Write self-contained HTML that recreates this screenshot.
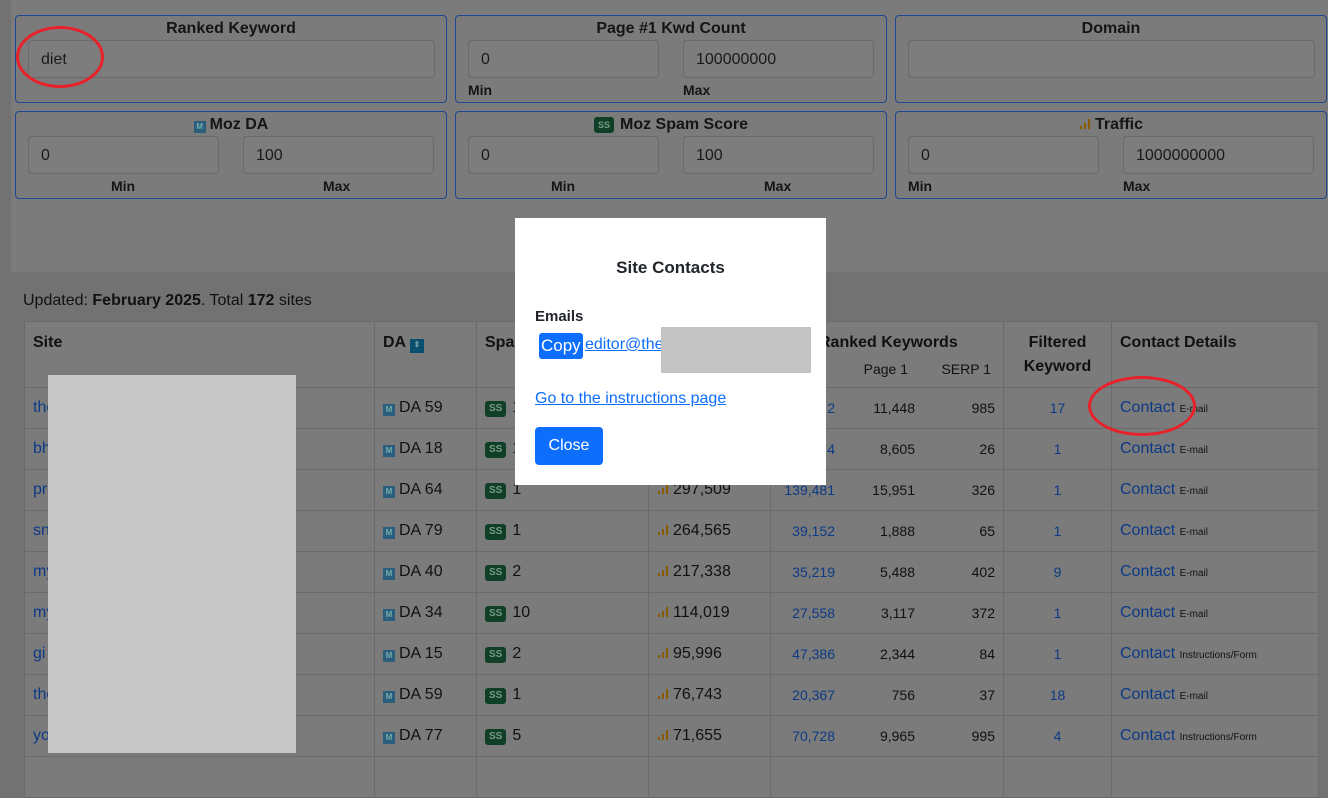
<!DOCTYPE html>
<html><head><meta charset="utf-8"><style>
*{box-sizing:border-box;margin:0;padding:0}
body{width:1328px;height:763px;overflow:hidden;background:#727272;font-family:"Liberation Sans",sans-serif;color:#111;position:relative}
.top{position:absolute;left:11px;top:0;width:1317px;height:272px;background:#7b7b7b}
.box{position:absolute;border:1px solid #1d4796;border-radius:4px;height:88px}
.box h4{position:absolute;top:4px;left:0;right:0;text-align:center;font-size:16px;font-weight:bold;color:#151515}
.inp{position:absolute;top:24px;height:38px;border:1px solid #6a6a6a;border-radius:4px;background:#7d7d7d;font-size:16px;padding:10px 12px;color:#1a1a1a}
.lab{position:absolute;top:66px;font-size:14px;font-weight:bold;color:#151515}
.upd{position:absolute;left:23px;top:292px;font-size:16px}
table{position:absolute;left:24px;top:321px;border-collapse:collapse;background:#7b7b7b;font-size:16px;table-layout:fixed}
td,th{border:1px solid #6b6b6b;height:41px;padding:0 8px;vertical-align:middle}
th{text-align:left;vertical-align:top;padding-top:11px;height:66px;line-height:24px}
th{padding-top:9px}
.b{color:#0c3a85}
.c{text-align:center}
.ss{display:inline-block;background:#0f3f26;color:#7a9a88;font-size:10px;font-weight:bold;border-radius:3px;padding:2px 4px;margin-right:6px;vertical-align:1px;line-height:12px}
.m{display:inline-block;width:12px;height:12px;background:#2a5e7c;color:#7aa;font-size:8px;text-align:center;line-height:12px;font-weight:bold;margin-right:4px;vertical-align:0}
.sm{font-size:10px;color:#111}
.bars{display:inline-block;width:12px;height:12px;margin-right:4px;vertical-align:0}
.red{position:absolute;border:3px solid #e8212a;border-radius:50%}
.modal{position:absolute;left:515px;top:218px;width:311px;height:267px;background:#fff}
.rk{position:relative;padding:0;font-size:14px}
.rk span{position:absolute;top:12px}
.k1{right:168px;color:#0c3a85}.k2{right:88px}.k3{right:8px}
</style></head><body>
<div class="top"></div>
<div class="box" style="left:15px;top:15px;width:432px"><h4>Ranked Keyword</h4><div class="inp" style="left:12px;width:407px">diet</div></div>
<div class="box" style="left:455px;top:15px;width:432px"><h4>Page #1 Kwd Count</h4><div class="inp" style="left:12px;width:191px">0</div><div class="inp" style="left:227px;width:191px">100000000</div><div class="lab" style="left:12px">Min</div><div class="lab" style="left:227px">Max</div></div>
<div class="box" style="left:895px;top:15px;width:432px"><h4>Domain</h4><div class="inp" style="left:12px;width:407px"></div></div>
<div class="box" style="left:15px;top:111px;width:432px"><h4><span class="m">M</span>Moz DA</h4><div class="inp" style="left:12px;width:191px">0</div><div class="inp" style="left:227px;width:191px">100</div><div class="lab" style="left:95px">Min</div><div class="lab" style="left:307px">Max</div></div>
<div class="box" style="left:455px;top:111px;width:432px"><h4><span class="ss" style="font-size:9px">SS</span>Moz Spam Score</h4><div class="inp" style="left:12px;width:191px">0</div><div class="inp" style="left:227px;width:191px">100</div><div class="lab" style="left:95px">Min</div><div class="lab" style="left:308px">Max</div></div>
<div class="box" style="left:895px;top:111px;width:432px"><h4><svg class="bars" viewBox="0 0 12 12"><rect x="1" y="9" width="2" height="3" fill="#8a5a00"/><rect x="5" y="6" width="2" height="6" fill="#8a5a00"/><rect x="9" y="2" width="2" height="10" fill="#8a5a00"/></svg>Traffic</h4><div class="inp" style="left:12px;width:191px">0</div><div class="inp" style="left:227px;width:191px">1000000000</div><div class="lab" style="left:12px">Min</div><div class="lab" style="left:227px">Max</div></div>
<div class="red" style="left:16px;top:26px;width:88px;height:62px"></div>
<div class="upd">Updated: <b>February 2025</b>. Total <b>172</b> sites</div>
<table>
<colgroup><col style="width:350px"><col style="width:102px"><col style="width:172px"><col style="width:122px"><col style="width:233px"><col style="width:108px"><col style="width:207px"></colgroup>
<tr><th>Site</th><th>DA <span class="m" style="width:14px;height:14px;background:#0b4f70">⇕</span></th><th>Spam</th><th>Traffic</th><th style="padding-left:48px;position:relative">Ranked Keywords<span style="position:absolute;font-weight:normal;font-size:14px;top:35px;right:95px">Page 1</span><span style="position:absolute;font-weight:normal;font-size:14px;top:35px;right:12px">SERP 1</span></th><th style="text-align:center">Filtered<br>Keyword</th><th>Contact Details</th></tr>
<tr><td class="b">the</td><td><span class="m">M</span>DA 59</td><td><span class="ss">SS</span>1</td><td></td><td class="rk"><span class="k1">2</span><span class="k2">11,448</span><span class="k3">985</span></td><td class="c b" style="font-size:14px">17</td><td><span class="b">Contact</span> <span class="sm">E-mail</span></td></tr>
<tr><td class="b">bh</td><td><span class="m">M</span>DA 18</td><td><span class="ss">SS</span>1</td><td></td><td class="rk"><span class="k1">4</span><span class="k2">8,605</span><span class="k3">26</span></td><td class="c b" style="font-size:14px">1</td><td><span class="b">Contact</span> <span class="sm">E-mail</span></td></tr>
<tr><td class="b">pr</td><td><span class="m">M</span>DA 64</td><td><span class="ss">SS</span>1</td><td><svg class="bars" viewBox="0 0 12 12"><rect x="1" y="9" width="2" height="3" fill="#8a5a00"/><rect x="5" y="6" width="2" height="6" fill="#8a5a00"/><rect x="9" y="2" width="2" height="10" fill="#8a5a00"/></svg>297,509</td><td class="rk"><span class="k1">139,481</span><span class="k2">15,951</span><span class="k3">326</span></td><td class="c b" style="font-size:14px">1</td><td><span class="b">Contact</span> <span class="sm">E-mail</span></td></tr>
<tr><td class="b">sn</td><td><span class="m">M</span>DA 79</td><td><span class="ss">SS</span>1</td><td><svg class="bars" viewBox="0 0 12 12"><rect x="1" y="9" width="2" height="3" fill="#8a5a00"/><rect x="5" y="6" width="2" height="6" fill="#8a5a00"/><rect x="9" y="2" width="2" height="10" fill="#8a5a00"/></svg>264,565</td><td class="rk"><span class="k1">39,152</span><span class="k2">1,888</span><span class="k3">65</span></td><td class="c b" style="font-size:14px">1</td><td><span class="b">Contact</span> <span class="sm">E-mail</span></td></tr>
<tr><td class="b">my</td><td><span class="m">M</span>DA 40</td><td><span class="ss">SS</span>2</td><td><svg class="bars" viewBox="0 0 12 12"><rect x="1" y="9" width="2" height="3" fill="#8a5a00"/><rect x="5" y="6" width="2" height="6" fill="#8a5a00"/><rect x="9" y="2" width="2" height="10" fill="#8a5a00"/></svg>217,338</td><td class="rk"><span class="k1">35,219</span><span class="k2">5,488</span><span class="k3">402</span></td><td class="c b" style="font-size:14px">9</td><td><span class="b">Contact</span> <span class="sm">E-mail</span></td></tr>
<tr><td class="b">my</td><td><span class="m">M</span>DA 34</td><td><span class="ss">SS</span>10</td><td><svg class="bars" viewBox="0 0 12 12"><rect x="1" y="9" width="2" height="3" fill="#8a5a00"/><rect x="5" y="6" width="2" height="6" fill="#8a5a00"/><rect x="9" y="2" width="2" height="10" fill="#8a5a00"/></svg>114,019</td><td class="rk"><span class="k1">27,558</span><span class="k2">3,117</span><span class="k3">372</span></td><td class="c b" style="font-size:14px">1</td><td><span class="b">Contact</span> <span class="sm">E-mail</span></td></tr>
<tr><td class="b">gi</td><td><span class="m">M</span>DA 15</td><td><span class="ss">SS</span>2</td><td><svg class="bars" viewBox="0 0 12 12"><rect x="1" y="9" width="2" height="3" fill="#8a5a00"/><rect x="5" y="6" width="2" height="6" fill="#8a5a00"/><rect x="9" y="2" width="2" height="10" fill="#8a5a00"/></svg>95,996</td><td class="rk"><span class="k1">47,386</span><span class="k2">2,344</span><span class="k3">84</span></td><td class="c b" style="font-size:14px">1</td><td><span class="b">Contact</span> <span class="sm">Instructions/Form</span></td></tr>
<tr><td class="b">the</td><td><span class="m">M</span>DA 59</td><td><span class="ss">SS</span>1</td><td><svg class="bars" viewBox="0 0 12 12"><rect x="1" y="9" width="2" height="3" fill="#8a5a00"/><rect x="5" y="6" width="2" height="6" fill="#8a5a00"/><rect x="9" y="2" width="2" height="10" fill="#8a5a00"/></svg>76,743</td><td class="rk"><span class="k1">20,367</span><span class="k2">756</span><span class="k3">37</span></td><td class="c b" style="font-size:14px">18</td><td><span class="b">Contact</span> <span class="sm">E-mail</span></td></tr>
<tr><td class="b">yo</td><td><span class="m">M</span>DA 77</td><td><span class="ss">SS</span>5</td><td><svg class="bars" viewBox="0 0 12 12"><rect x="1" y="9" width="2" height="3" fill="#8a5a00"/><rect x="5" y="6" width="2" height="6" fill="#8a5a00"/><rect x="9" y="2" width="2" height="10" fill="#8a5a00"/></svg>71,655</td><td class="rk"><span class="k1">70,728</span><span class="k2">9,965</span><span class="k3">995</span></td><td class="c b" style="font-size:14px">4</td><td><span class="b">Contact</span> <span class="sm">Instructions/Form</span></td></tr>
<tr><td></td><td></td><td></td><td></td><td></td><td></td><td></td></tr>
</table>
<div style="position:absolute;left:48px;top:375px;width:248px;height:378px;background:#c8c8c8"></div>
<div class="red" style="left:1088px;top:376px;width:108px;height:60px"></div>
<div class="modal">
<div style="position:absolute;top:40px;left:0;right:0;text-align:center;font-weight:bold;font-size:17px;color:#212529">Site Contacts</div>
<div style="position:absolute;top:90px;left:20px;font-weight:bold;font-size:15px;color:#212529">Emails</div>
<div style="position:absolute;top:115px;left:24px;background:#0d6efd;color:#fff;font-size:17px;padding:2px 2px;border-radius:3px;line-height:22px">Copy</div>
<div style="position:absolute;top:118px;left:70px;color:#0d6efd;text-decoration:underline;font-size:16px">editor@the</div>
<div style="position:absolute;top:109px;left:146px;width:150px;height:46px;background:#c3c3c3"></div>
<div style="position:absolute;top:172px;left:20px;color:#0d6efd;text-decoration:underline;font-size:16px">Go to the instructions page</div>
<div style="position:absolute;top:209px;left:20px;width:68px;height:38px;background:#0d6efd;color:#fff;border-radius:4px;font-size:16px;text-align:center;line-height:38px">Close</div>
</div>
</body></html>
